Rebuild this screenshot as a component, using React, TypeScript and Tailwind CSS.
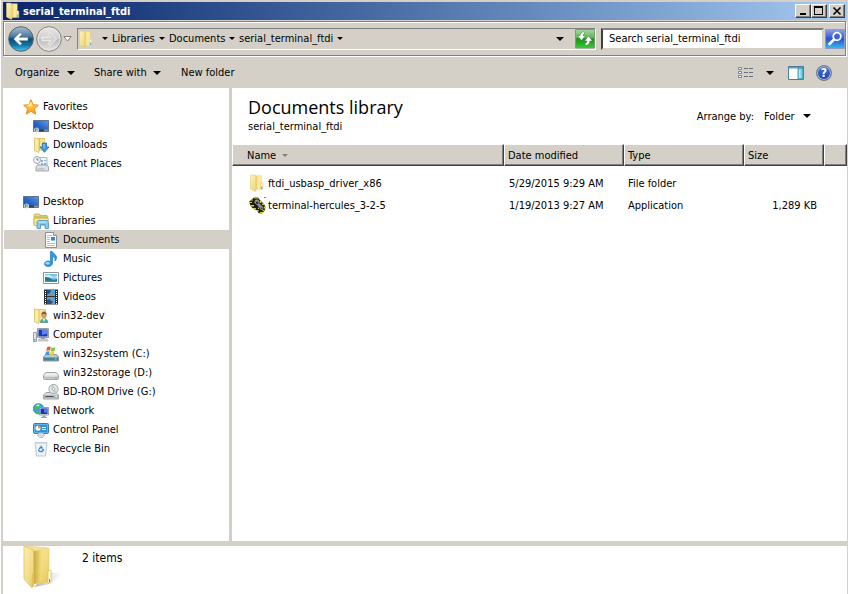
import React from "react";

type IconProps = { className?: string };

/* ---------- small glyphs ---------- */

function CaretSmall({ className = "text-black" }: IconProps) {
  return (
    <svg width="6" height="3" viewBox="0 0 6 3" className={className} aria-hidden="true">
      <path d="M0 0h6L3 3z" fill="currentColor" />
    </svg>
  );
}

function Caret({ className = "text-black" }: IconProps) {
  return (
    <svg width="8" height="4" viewBox="0 0 8 4" className={className} aria-hidden="true">
      <path d="M0 0h8L4 4z" fill="currentColor" />
    </svg>
  );
}

/* ---------- icons, 16 x 16 ---------- */

function FolderIcon() {
  return (
    <svg width="16" height="18" viewBox="0 0 16 18" aria-hidden="true">
      <defs>
        <linearGradient id="fa" x1="0" x2="1" y1="0" y2="1">
          <stop offset="0" stopColor="#fff3b8" />
          <stop offset="1" stopColor="#ecd378" />
        </linearGradient>
        <linearGradient id="fb" x1="0" x2="1" y1="0" y2="0">
          <stop offset="0" stopColor="#cfae45" />
          <stop offset=".5" stopColor="#f3dd85" />
          <stop offset="1" stopColor="#e8cd6a" />
        </linearGradient>
      </defs>
      <path d="M4 1.500h8.500V15L6 16z" fill="url(#fb)" />
      <path d="M1.500 1h4l1.500 1.500V17l-1 .3L1.500 15z" fill="url(#fa)" stroke="#dcc266" strokeWidth=".5" />
      <path d="M8.500 2h3.500v9l-1 4.500H8.500z" fill="#f9e9a0" />
      <path d="M11.500 9h2.300v6.500h-2.300z" fill="#fdf6cf" stroke="#dcc266" strokeWidth=".5" />
      <path d="M12.300 12.500h1v2.500h-1z" fill="#3fa0dc" />
    </svg>
  );
}

function StarIcon() {
  return (
    <svg width="16" height="16" viewBox="0 0 16 16" aria-hidden="true">
      <defs>
        <linearGradient id="st" x1="0" x2="0" y1="0" y2="1">
          <stop offset="0" stopColor="#ffe55a" />
          <stop offset="1" stopColor="#ff9a1c" />
        </linearGradient>
      </defs>
      <path d="M8 .8l2.100 4.900 5.300.5-4 3.600 1.300 5.300L8 12.300 3.300 15.100l1.300-5.300-4-3.600 5.300-.5z" fill="url(#st)" stroke="#e88a22" strokeWidth="1" strokeLinejoin="round" />
      <path d="M8 2.800l1.400 3.600L8 7.500 4 7z" fill="#fff4a8" opacity=".8" />
    </svg>
  );
}

function DesktopIcon() {
  return (
    <svg width="16" height="16" viewBox="0 0 16 16" aria-hidden="true">
      <defs>
        <linearGradient id="dk" x1="0" x2="1" y1="1" y2="0">
          <stop offset="0" stopColor="#173f97" />
          <stop offset=".55" stopColor="#2f6fc9" />
          <stop offset="1" stopColor="#5f9de4" />
        </linearGradient>
      </defs>
      <path d="M.5 2.500h15v11H.5z" fill="url(#dk)" stroke="#5f7390" />
      <path d="M1 11.500h14v2H1z" fill="#33415c" />
      <path d="M11 11.500h4v2h-4z" fill="#8593a8" />
      <circle cx="3.500" cy="12" r="2.500" fill="#bfe2fa" />
      <path d="M2 10.500h1.500V12H2z" fill="#e8562b" />
      <path d="M3.500 10.500H5V12H3.500z" fill="#6dbb3a" />
      <path d="M2 12h1.500v1.500H2z" fill="#2a8fe6" />
      <path d="M3.500 12H5v1.500H3.500z" fill="#f6c52b" />
    </svg>
  );
}

function DownloadsIcon() {
  return (
    <svg width="16" height="16" viewBox="0 0 16 16" aria-hidden="true">
      <path d="M5 1h7v12l-7 1z" fill="#e3c765" />
      <path d="M1.500.8L6 2v13.500l-4.500-1.700z" fill="#fbeca2" stroke="#d4b657" strokeWidth=".7" />
      <path d="M7 2h4.500v9L7 14z" fill="#f6e397" />
      <path d="M9.500 6h4v4H16l-4.500 5.300L7 10h2.500z" fill="#3c9be6" stroke="#1c68b3" strokeWidth=".8" />
      <path d="M10.500 7h1v4h-1z" fill="#9bd4fb" />
    </svg>
  );
}

function RecentIcon() {
  return (
    <svg width="16" height="16" viewBox="0 0 16 16" aria-hidden="true">
      <path d="M5 1.500h9v9H5z" fill="#f2f6f9" stroke="#9aa5ad" strokeWidth=".8" />
      <path d="M8 4h2v2H8zM11 4h2v1h-2zM8 7h2v2H8zM11 7h2v2h-2z" fill="#7bb9e2" />
      <path d="M3 11l1.500-2h9.500l1.500 2v4H3z" fill="#dfe3e6" stroke="#8d969c" strokeWidth=".8" />
      <path d="M4.500 12.500h7v1h-7z" fill="#a3acb2" />
      <circle cx="4" cy="4" r="3.500" fill="#eef4f8" stroke="#97a3ab" strokeWidth=".9" />
      <path d="M4 2v2h1.700" fill="none" stroke="#4d5f6b" strokeWidth=".8" />
    </svg>
  );
}

function LibrariesIcon() {
  return (
    <svg width="16" height="16" viewBox="0 0 16 16" aria-hidden="true">
      <path d="M1 2.500L2 1h4.500l1 1.500h6.500l.7.800V12H1z" fill="#f1d876" stroke="#c7a443" strokeWidth=".8" />
      <path d="M2 3.500h12v1.200H2z" fill="#8fc56f" />
      <path d="M1.200 5.200h14l-.5 7.500H1.200z" fill="#fbe99b" stroke="#d2b04c" strokeWidth=".7" />
      <path d="M4 15.500V9.500Q4 7.500 6 7.500h7.500q2 0 2 2v6H12V11.500H7.500v4z" fill="#86c8ee" stroke="#4a93c8" strokeWidth=".8" />
      <path d="M5.500 8.500h8v1h-8z" fill="#d2effd" />
    </svg>
  );
}

function DocumentIcon() {
  return (
    <svg width="16" height="16" viewBox="0 0 16 16" aria-hidden="true">
      <path d="M2.500.5h8l3 3v12h-11z" fill="#fff" stroke="#8b8f97" />
      <path d="M10.500.5v3h3" fill="#e8ebef" stroke="#8b8f97" />
      <path d="M4 3.500h5M4 5.500h3M4 7.500h3M4 9.500h3M4 11.500h8M4 13.500h8" stroke="#b4c0cc" />
      <path d="M8 5h4v4H8z" fill="#3f7fc9" />
      <path d="M8 8h4v1H8z" fill="#7cc3ee" />
    </svg>
  );
}

function MusicIcon() {
  return (
    <svg width="16" height="16" viewBox="0 0 16 16" aria-hidden="true">
      <path d="M7.500.5h1.700c.6 2 4.800 3.100 4.300 6.500-.2 1.500-1 2.600-1.700 3 .8-2.700-.4-4-2.300-4.500V12c0 2-1.800 3.500-4.300 3.500S1.500 14.300 1.500 12.800 3.300 10 5.300 10c.8 0 1.500.1 2.200.4z" fill="#2f9be3" stroke="#1e76ba" strokeWidth=".7" />
      <ellipse cx="4.700" cy="12.200" rx="2" ry="1.200" fill="#a3dcfb" />
    </svg>
  );
}

function PicturesIcon() {
  return (
    <svg width="16" height="16" viewBox="0 0 16 16" aria-hidden="true">
      <path d="M.5 2.500h15v11H.5z" fill="#fff" stroke="#8d9399" />
      <path d="M2 4h12v8H2z" fill="#79c3ec" />
      <path d="M2 5.500q4-1 6 .5t6 0v1.500H2z" fill="#d7f0fb" />
      <path d="M2 7q4 0 6 1.800t6 .2v3H2z" fill="#25737f" />
      <path d="M2 10.500h12V12H2z" fill="#2d9ba8" />
    </svg>
  );
}

function VideosIcon() {
  return (
    <svg width="16" height="16" viewBox="0 0 16 16" aria-hidden="true">
      <path d="M1 .5h14v15H1z" fill="#2b2f36" />
      <path d="M4 1h8v6H4zM4 8h8v7H4z" fill="#4aa5df" />
      <path d="M4 1h4l-1 3-3 2zM4 11l3-1 3 3-2 2H4z" fill="#23508a" />
      <path d="M8 3l3 1-1 3H7zM6 9l4 1 1 2-3 0z" fill="#a58a78" />
      <path d="M2 2h1v1H2zM2 4h1v1H2zM2 6h1v1H2zM2 8h1v1H2zM2 10h1v1H2zM2 12h1v1H2zM2 14h1v1H2zM13 2h1v1h-1zM13 4h1v1h-1zM13 6h1v1h-1zM13 8h1v1h-1zM13 10h1v1h-1zM13 12h1v1h-1zM13 14h1v1h-1z" fill="#fff" />
    </svg>
  );
}

function UserFolderIcon() {
  return (
    <svg width="16" height="16" viewBox="0 0 16 16" aria-hidden="true">
      <path d="M5 1h8v12l-8 1z" fill="#e7cc6c" />
      <path d="M1.500.8L6 2v13.500l-4.500-1.700z" fill="#fbeca2" stroke="#d4b657" strokeWidth=".7" />
      <path d="M6.500 2H12v9l-5.500 2z" fill="#f6e397" />
      <path d="M7 15c0-3 1.500-4.500 4-4.500s4.300 1.500 4.300 4.500z" fill="#5fa595" />
      <path d="M10 11h2l-1 3z" fill="#fff" />
      <circle cx="11" cy="7.500" r="2.600" fill="#d89a6a" />
      <path d="M8.300 7c0-2.600 1.500-3.500 2.900-3.500S13.800 4.500 13.700 7L12.500 6H9.500z" fill="#8a5a33" />
    </svg>
  );
}

function ComputerIcon() {
  return (
    <svg width="16" height="16" viewBox="0 0 16 16" aria-hidden="true">
      <path d="M.5 5.500h3v9h-3z" fill="#dfe3e7" stroke="#868d95" strokeWidth=".8" />
      <path d="M1 12h1.500v1.500H1z" fill="#54c24c" />
      <path d="M4.500 1.500h11v9h-11z" fill="#d9dce0" stroke="#8e959c" strokeWidth=".9" />
      <path d="M5.500 2.500h9v7h-9z" fill="#1b38b8" />
      <path d="M9 2.500h5.500v4L9 8z" fill="#5f86ef" />
      <path d="M8 10.500h4V12H8z" fill="#8c949b" />
      <path d="M6 12h8l1 2H5z" fill="#d3d7da" stroke="#9ca3a9" strokeWidth=".6" />
    </svg>
  );
}

function SystemDriveIcon() {
  return (
    <svg width="16" height="16" viewBox="0 0 16 16" aria-hidden="true">
      <path d="M2.500 8.500h11l2 2.500v4H.5v-4z" fill="#b8c6cd" stroke="#6e8088" strokeWidth=".8" />
      <path d="M1 11.500h14v3H1z" fill="#4a7f98" />
      <path d="M11.500 12.300h2v1.400h-2z" fill="#5ee058" />
      <path d="M4 1.500Q6-.3 7.800 1L6.900 4.700Q5 3.800 3.100 5.200z" fill="#ea5a27" />
      <path d="M8.500 1.300q2 1 4 0l-1 3.800q-2 1-3.900 0z" fill="#7fc241" />
      <path d="M3 5.900q1.900-1.300 3.700-.4L5.800 9.300Q4 8.300 2 9.600z" fill="#3a9be6" />
      <path d="M7.400 5.900q2 .8 3.900-.1l-1 3.700q-1.900 1-3.800 0z" fill="#fbc82c" />
    </svg>
  );
}

function DriveIcon() {
  return (
    <svg width="16" height="16" viewBox="0 0 16 16" aria-hidden="true">
      <path d="M3 7.500h10q1.500.7 2.500 3v3q0 1-1 1h-13q-1 0-1-1v-3q1-2.300 2.500-3z" fill="#eceeef" stroke="#979ca0" strokeWidth=".9" />
      <path d="M1 10.500h14v3.300H1z" fill="#b9bdc1" />
      <path d="M1.500 10.500h13v1h-13z" fill="#f6f7f8" />
      <path d="M12 12h2v1.300h-2z" fill="#4fcf45" />
    </svg>
  );
}

function DiscDriveIcon() {
  return (
    <svg width="16" height="16" viewBox="0 0 16 16" aria-hidden="true">
      <path d="M3 8.500h10l2.500 2.500v4H.5v-4z" fill="#d9dcde" stroke="#8c9297" strokeWidth=".8" />
      <path d="M1 11.200h14v3.400H1z" fill="#aeb4b8" />
      <circle cx="10.500" cy="5" r="4.600" fill="#e4e7ea" stroke="#8f959a" strokeWidth=".8" />
      <path d="M10.500 5L7.500 1.700Q9 .6 10.500.7zM10.500 5l3.300 2.800q-1.200 1.500-3 1.500z" fill="#b3d3b8" />
      <circle cx="10.500" cy="5" r="1.400" fill="#fff" stroke="#91979c" strokeWidth=".7" />
      <path d="M2.500 12h8v1h-8z" fill="#474d52" />
      <path d="M12.500 12H14v1h-1.500z" fill="#f3f4f5" />
    </svg>
  );
}

function NetworkIcon() {
  return (
    <svg width="16" height="16" viewBox="0 0 16 16" aria-hidden="true">
      <circle cx="5.500" cy="5.800" r="5.200" fill="#36a4dd" stroke="#2779b1" strokeWidth=".7" />
      <path d="M2 3q3-2.500 5-1.500L6.500 4 4 6.500 1.500 6zM4 8l3 1-1.500 2q-2-.5-2.500-2z" fill="#4eb947" />
      <path d="M3 2.500Q5 1 7 1.800L5 3.500z" fill="#d7f5e0" />
      <path d="M6.500 4.500h9v7.500h-9z" fill="#dfe2e6" stroke="#858c94" strokeWidth=".8" />
      <path d="M7.500 5.500h7V11h-7z" fill="#1734ae" />
      <path d="M11 5.500h3.500V9L11 10z" fill="#5079e8" />
      <path d="M9.500 12.500h3V14h1.500v1H8v-1h1.500z" fill="#9aa1a8" />
    </svg>
  );
}

function ControlPanelIcon() {
  return (
    <svg width="16" height="16" viewBox="0 0 16 16" aria-hidden="true">
      <rect x=".5" y="1.500" width="15" height="10" rx="1" fill="#5cb2e6" stroke="#3a7db3" />
      <path d="M2 3h12v7H2z" fill="#3490d3" />
      <circle cx="5" cy="6.300" r="2.500" fill="#fff" />
      <path d="M5 6.300V3.800a2.500 2.500 0 012.500 2.500z" fill="#f08b2c" />
      <path d="M9 5.500h4M9 7.500h4" stroke="#e6f6ff" />
      <path d="M5.500 11h5l1 2.500-2 2h-3l-2-2z" fill="#d9dcde" stroke="#9da3a8" strokeWidth=".6" />
    </svg>
  );
}

function RecycleIcon() {
  return (
    <svg width="16" height="16" viewBox="0 0 16 16" aria-hidden="true">
      <path d="M2 1.500h12l-1.500 13.500h-9z" fill="#edf4fa" stroke="#a9b7c4" strokeWidth=".8" />
      <path d="M2 1.500h12l-.2 1.500H2.200z" fill="#cfdbe6" />
      <path d="M8 5.500L10.300 9 9.500 10.500H6.500L5.700 9z" fill="none" stroke="#3f7fd6" strokeWidth="1.400" strokeDasharray="2.400 .5" />
    </svg>
  );
}

function HerculesIcon() {
  return (
    <svg width="17" height="17" viewBox="0 0 17 17" aria-hidden="true">
      <path d="M0 5l2-2 3-2.500h4L10 2l2 2 3 3 1.500 3-1 4-3 2.500-3-.5-2-3-3-1L2 9.500z" fill="#1b1b16" />
      <path d="M5 .5h4v1H5zM2 2.500h2v1H2zM0 5h3v1H0zM2 8h3v1.500H2zM4 11h3v1.200H4zM8 13h1.500v2H8zM11 3.500h1.500V6H11zM13 6.500h2V8h-2zM15 9.500h1.500v2H15zM11 15h3v1h-3zM13.500 13h2v1h-2zM9 10l1.500 2H9z" fill="#d6d224" />
      <path d="M5.500 6V4L7 2.500h2L10.500 4v2.500L13 9l1.500 1v2l-1.300 1.300-1.700-.8-1-2L8 8z" fill="#8c9094" />
      <path d="M7 5l2-.5.5 2-1.200.5L7 6.500zM12 10.800l1.500-.2v1.300h-1z" fill="#26282b" />
      <path d="M15.500 0h1v1h-1z" fill="#111" />
    </svg>
  );
}

function LargeFolderIcon() {
  return (
    <svg width="42" height="46" viewBox="0 0 42 46" aria-hidden="true">
      <defs>
        <linearGradient id="lf" x1="0" x2="1" y1="0" y2="1">
          <stop offset="0" stopColor="#fdf0b4" />
          <stop offset="1" stopColor="#e9cf69" />
        </linearGradient>
        <linearGradient id="lb" x1="0" x2="1" y1="0" y2="1">
          <stop offset="0" stopColor="#f6e6a2" />
          <stop offset=".6" stopColor="#f3dd80" />
          <stop offset="1" stopColor="#e6c95f" />
        </linearGradient>
        <linearGradient id="lm" x1="0" x2="1" y1="0" y2="0">
          <stop offset="0" stopColor="#cdaa41" />
          <stop offset="1" stopColor="#f3da78" />
        </linearGradient>
        <linearGradient id="ls" x1="0" x2="1" y1="0" y2="0">
          <stop offset="0" stopColor="#777" stopOpacity=".6" />
          <stop offset="1" stopColor="#999" stopOpacity="0" />
        </linearGradient>
      </defs>
      <path d="M11 41L27 26l12 2-12 10z" fill="url(#ls)" />
      <path d="M2 0l24 2v34L11 38z" fill="url(#lb)" stroke="#e2ca74" strokeWidth=".6" />
      <path d="M11 5l7-1v32l-7 2z" fill="url(#lm)" />
      <path d="M1 0l9.500 4v24l-1.500 3v11L1 33z" fill="url(#lf)" stroke="#d9bd5e" strokeWidth=".7" />
      <path d="M9 27h2v13l-2 2z" fill="#e0c25c" />
      <path d="M25 25l3-1v12l-3 1.500z" fill="#fff9db" stroke="#d8bc5a" strokeWidth=".7" />
      <path d="M26 33h1v3h-1z" fill="#3c98da" />
    </svg>
  );
}

function BackIcon() {
  return (
    <svg width="26" height="28" viewBox="0 0 26 28" aria-hidden="true">
      <defs>
        <linearGradient id="bk" x1="0" x2="0" y1="0" y2="1">
          <stop offset="0" stopColor="#a9bfce" />
          <stop offset=".4" stopColor="#4b7c9f" />
          <stop offset=".5" stopColor="#0d4b78" />
          <stop offset=".75" stopColor="#1175a6" />
          <stop offset="1" stopColor="#43d0f4" />
        </linearGradient>
      </defs>
      <circle cx="13" cy="14" r="12.300" fill="url(#bk)" stroke="#59636b" />
      <path d="M5.500 14l6.500-6.500 2 2L11.200 12.300H20v3.400h-8.800L14 18.500l-2 2z" fill="#fff" stroke="#335f80" strokeWidth=".5" />
    </svg>
  );
}

function ForwardIcon() {
  return (
    <svg width="26" height="28" viewBox="0 0 26 28" aria-hidden="true">
      <defs>
        <linearGradient id="fw" x1="0" x2="0" y1="0" y2="1">
          <stop offset="0" stopColor="#e9e8e6" />
          <stop offset=".48" stopColor="#cfcecc" />
          <stop offset=".5" stopColor="#bcbbb9" />
          <stop offset="1" stopColor="#e6e5e3" />
        </linearGradient>
      </defs>
      <circle cx="13" cy="14" r="12.300" fill="url(#fw)" stroke="#828282" />
      <circle cx="13" cy="14" r="11" fill="none" stroke="#f1f0ee" strokeWidth=".8" />
      <path d="M20.500 14L14 7.500l-2 2 2.800 2.800H6v3.400h8.800L12 18.500l2 2z" fill="#d3d2d0" stroke="#f4f4f4" strokeWidth=".9" />
    </svg>
  );
}

function RefreshIcon() {
  return (
    <svg width="20" height="20" viewBox="0 0 20 20" aria-hidden="true">
      <defs>
        <linearGradient id="rf" x1="0" x2="0" y1="0" y2="1">
          <stop offset="0" stopColor="#a5d9a2" />
          <stop offset=".45" stopColor="#5db35a" />
          <stop offset=".5" stopColor="#159017" />
          <stop offset="1" stopColor="#3cc936" />
        </linearGradient>
      </defs>
      <path d="M.5.5h19v18.500H.5z" fill="url(#rf)" stroke="#6fa56c" />
      <path d="M9 2.500Q5.500 3 5.200 6.500H2.500l4 5 4-5H8Q8 5 9.500 4.500z" fill="#fff" stroke="#3c7d3c" strokeWidth=".5" />
      <path d="M10.500 16.500q4.200-.5 4.300-4.500h2.700l-4-5-4 5H12q0 2-2 2.500z" fill="#fff" stroke="#3c7d3c" strokeWidth=".5" />
    </svg>
  );
}

function SearchIcon() {
  return (
    <svg width="20" height="20" viewBox="0 0 20 20" aria-hidden="true">
      <defs>
        <linearGradient id="se" x1="0" x2="0" y1="0" y2="1">
          <stop offset="0" stopColor="#8fa4ee" />
          <stop offset=".5" stopColor="#2c50cc" />
          <stop offset="1" stopColor="#35bdf2" />
        </linearGradient>
      </defs>
      <path d="M.5.5h19v19H.5z" fill="url(#se)" stroke="#8c9cca" />
      <circle cx="12" cy="7.500" r="3.800" fill="#3e68cf" stroke="#fff" strokeWidth="1.800" />
      <path d="M9 10.500L4.500 15" stroke="#fff" strokeWidth="2.600" strokeLinecap="round" />
    </svg>
  );
}

function ViewIcon() {
  return (
    <svg width="16" height="14" viewBox="0 0 16 14" aria-hidden="true">
      <path d="M.5 1.500h3v2h-3zM.5 5.500h3v2h-3zM.5 9.500h3v2h-3z" fill="#fff" stroke="#7585a8" />
      <path d="M6 2.500h4M11 2.500h4M6 6.500h4M11 6.500h4M6 10.500h4M11 10.500h4" stroke="#66707c" />
    </svg>
  );
}

function PreviewPaneIcon() {
  return (
    <svg width="16" height="14" viewBox="0 0 16 14" aria-hidden="true">
      <path d="M.5.500h15v13H.5z" fill="#fff" stroke="#4c7c9c" />
      <path d="M1 1h14v1.500H1z" fill="#5b9fc6" />
      <path d="M10 2h5v11h-5z" fill="#6fd0e6" stroke="#3c85a6" strokeWidth=".8" />
      <path d="M11 4h1.500v8H11z" fill="#b3eef7" />
    </svg>
  );
}

function HelpIcon() {
  return (
    <span className="flex size-4 items-center justify-center rounded-full border border-[#727782] bg-linear-to-b from-[#4c74d8] to-[#1a3fb4] text-xs leading-3 font-bold text-white shadow-[inset_0_0_0_1px_#aebcdf]">
      ?
    </span>
  );
}

/* ---------- data ---------- */

type TreeItem = { label: string; icon: () => React.ReactElement; level: 0 | 1 | 2; selected?: boolean };

const favorites: TreeItem[] = [
  { label: "Favorites", icon: StarIcon, level: 0 },
  { label: "Desktop", icon: DesktopIcon, level: 1 },
  { label: "Downloads", icon: DownloadsIcon, level: 1 },
  { label: "Recent Places", icon: RecentIcon, level: 1 },
];

const desktop: TreeItem[] = [
  { label: "Desktop", icon: DesktopIcon, level: 0 },
  { label: "Libraries", icon: LibrariesIcon, level: 1 },
  { label: "Documents", icon: DocumentIcon, level: 2, selected: true },
  { label: "Music", icon: MusicIcon, level: 2 },
  { label: "Pictures", icon: PicturesIcon, level: 2 },
  { label: "Videos", icon: VideosIcon, level: 2 },
  { label: "win32-dev", icon: UserFolderIcon, level: 1 },
  { label: "Computer", icon: ComputerIcon, level: 1 },
  { label: "win32system (C:)", icon: SystemDriveIcon, level: 2 },
  { label: "win32storage (D:)", icon: DriveIcon, level: 2 },
  { label: "BD-ROM Drive (G:)", icon: DiscDriveIcon, level: 2 },
  { label: "Network", icon: NetworkIcon, level: 1 },
  { label: "Control Panel", icon: ControlPanelIcon, level: 1 },
  { label: "Recycle Bin", icon: RecycleIcon, level: 1 },
];

const indent = ["pl-[19px]", "pl-[29px]", "pl-[39px]"];

const files = [
  { name: "ftdi_usbasp_driver_x86", date: "5/29/2015 9:29 AM", type: "File folder", size: "", icon: FolderIcon },
  { name: "terminal-hercules_3-2-5", date: "1/19/2013 9:27 AM", type: "Application", size: "1,289 KB", icon: HerculesIcon },
];

/* ---------- parts ---------- */

function Tree({ items, label }: { items: TreeItem[]; label: string }) {
  return (
    <ul aria-label={label}>
      {items.map((item) => (
        <li key={item.label} className={item.selected ? "ml-px bg-[#d4d0c8]" : "ml-px"}>
          <a href="#" className={`flex h-[19px] items-center gap-1 ${indent[item.level]}`}>
            <item.icon />
            <span>{item.label}</span>
          </a>
        </li>
      ))}
    </ul>
  );
}

const captionButton =
  "flex h-[14px] w-4 items-center justify-center border border-t-white border-l-white border-r-[#404040] border-b-[#404040] bg-[#d4d0c8] shadow-[inset_-1px_-1px_0_#808080]";

function TitleBar() {
  return (
    <header className="flex h-[18px] items-center bg-linear-to-r from-[#0a246a] to-[#a6caf0] pr-0.5 pl-0.5 text-white">
      <FolderIcon />
      <h1 className="ml-0.5 flex-1 font-bold">serial_terminal_ftdi</h1>
      <button aria-label="Minimize" className={captionButton}>
        <svg width="12" height="10" viewBox="0 0 12 10" aria-hidden="true"><path d="M3 7h6v2H3z" /></svg>
      </button>
      <button aria-label="Maximize" className={captionButton}>
        <svg width="12" height="10" viewBox="0 0 12 10" aria-hidden="true"><path d="M1 0h9v9H1zM2 2v6h7V2z" fillRule="evenodd" /></svg>
      </button>
      <button aria-label="Close" className={`ml-0.5 ${captionButton}`}>
        <svg width="12" height="10" viewBox="0 0 12 10" aria-hidden="true"><path d="M2.500 1.500l7 7M9.500 1.500l-7 7" stroke="#000" strokeWidth="1.600" /></svg>
      </button>
    </header>
  );
}

function AddressBar() {
  return (
    <div className="mt-px mr-px flex h-[35px] items-center border border-[#808080] pl-1 shadow-[inset_1px_1px_0_#fff,1px_1px_0_#fff]">
      <button aria-label="Back"><BackIcon /></button>
      <button aria-label="Forward" className="ml-0.5"><ForwardIcon /></button>
      <button aria-label="Recent pages" className="ml-px">
        <svg width="9" height="6" viewBox="0 0 9 6" aria-hidden="true"><path d="M.8.5h7.400L4.500 5z" fill="#fff" stroke="#777" strokeWidth=".9" /></svg>
      </button>
      <nav aria-label="Address" className="ml-[5px] flex h-[22px] flex-1 items-center border border-t-[#808080] border-r-white border-b-white border-l-[#808080] whitespace-nowrap">
        <FolderIcon />
        <span className="ml-2"><CaretSmall /></span>
        <a href="#" className="ml-1 w-[43px]">Libraries</a>
        <span className="ml-1"><CaretSmall /></span>
        <a href="#" className="ml-1 w-14">Documents</a>
        <span className="ml-1"><CaretSmall /></span>
        <a href="#" className="ml-1 w-[94px]">serial_terminal_ftdi</a>
        <span className="ml-1"><CaretSmall /></span>
        <button aria-label="Previous locations" className="mr-[11px] ml-auto"><Caret /></button>
        <button aria-label="Refresh"><RefreshIcon /></button>
      </nav>
      <input
        type="search"
        aria-label="Search serial_terminal_ftdi"
        placeholder="Search serial_terminal_ftdi"
        className="ml-[5px] h-[22px] w-[223px] border-2 border-t-[#808080] border-r-[#d4d0c8] border-b-[#d4d0c8] border-l-[#404040] bg-white pl-1.5 outline-none placeholder:text-black"
      />
      <button aria-label="Search" className="ml-px"><SearchIcon /></button>
    </div>
  );
}

function Toolbar() {
  return (
    <div className="flex h-[33px] items-center pr-[15px] pl-3">
      <button className="flex items-center gap-2"><span className="w-11 text-left">Organize</span><Caret /></button>
      <button className="ml-[19px] flex items-center gap-1.5"><span className="w-[53px] text-left whitespace-nowrap">Share with</span><Caret /></button>
      <button className="ml-5">New folder</button>
      <button aria-label="Change view" className="ml-auto"><ViewIcon /></button>
      <button aria-label="More view options" className="ml-3"><Caret /></button>
      <button aria-label="Preview pane" className="ml-[14px]"><PreviewPaneIcon /></button>
      <button aria-label="Help" className="ml-3"><HelpIcon /></button>
    </div>
  );
}

const headCell =
  "h-[22px] border-t border-r border-b border-l border-t-white border-r-[#404040] border-b-[#404040] border-l-white bg-[#d4d0c8] p-0 pl-[3px] text-left font-normal shadow-[inset_-1px_-1px_0_#808080]";

function FileTable() {
  return (
    <table className="w-full table-fixed border-separate border-spacing-0">
      <colgroup>
        <col />
        <col className="w-[120px]" />
        <col className="w-[120px]" />
        <col className="w-20" />
        <col className="w-[23px]" />
      </colgroup>
      <thead>
        <tr>
          <th className={headCell}>
            <span className="flex items-center gap-1.5 pl-[11px]">Name <CaretSmall className="text-[#808080]" /></span>
          </th>
          <th className={headCell}>Date modified</th>
          <th className={headCell}>Type</th>
          <th className={headCell}>Size</th>
          <td className={headCell} />
        </tr>
      </thead>
      <tbody>
        <tr className="h-1.5" />
        {files.map((f) => (
          <tr key={f.name} className="h-[22px]">
            <td className="p-0 pl-[17px]">
              <span className="flex items-center gap-0.5">
                <span className="flex w-[17px] shrink-0"><f.icon /></span>
                {f.name}
              </span>
            </td>
            <td className="p-0 pl-[5px] whitespace-nowrap">{f.date}</td>
            <td className="p-0 pl-1">{f.type}</td>
            <td className="p-0 pr-[7px] text-right whitespace-nowrap">{f.size}</td>
            <td />
          </tr>
        ))}
      </tbody>
    </table>
  );
}

export default function App() {
  return (
    <div className="flex h-screen flex-col border-l border-white bg-[#d4d0c8] pt-0.5 pr-px pl-0.5 font-['DejaVu_Sans_Condensed','DejaVu_Sans',sans-serif] text-[11px] leading-[15px] text-black">
      <TitleBar />
      <AddressBar />
      <Toolbar />
      <div className="-mt-px flex min-h-0 flex-1 gap-[3px]">
        <aside className="flex w-[226px] flex-col gap-[19px] bg-white pt-[9px]">
          <Tree items={favorites} label="Favorites" />
          <Tree items={desktop} label="Desktop" />
        </aside>
        <main className="min-w-0 flex-1 bg-white">
          <div className="flex h-14 items-center justify-between pr-9 pl-4">
            <div>
              <h2 className="font-['Open_Sans','Noto_Sans',sans-serif] text-lg leading-6">Documents library</h2>
              <p className="pb-1">serial_terminal_ftdi</p>
            </div>
            <div className="flex items-center">
              <label htmlFor="arrange">Arrange by:</label>
              <select id="arrange" className="ml-2.5 w-[39px] appearance-none bg-white outline-none">
                <option>Folder</option>
              </select>
              <Caret />
            </div>
          </div>
          <FileTable />
        </main>
      </div>
      <footer className="mt-[5px] flex h-12 items-start gap-[17px] bg-white pl-5">
        <LargeFolderIcon />
        <p className="pt-1 text-xs leading-4">2 items</p>
      </footer>
    </div>
  );
}
